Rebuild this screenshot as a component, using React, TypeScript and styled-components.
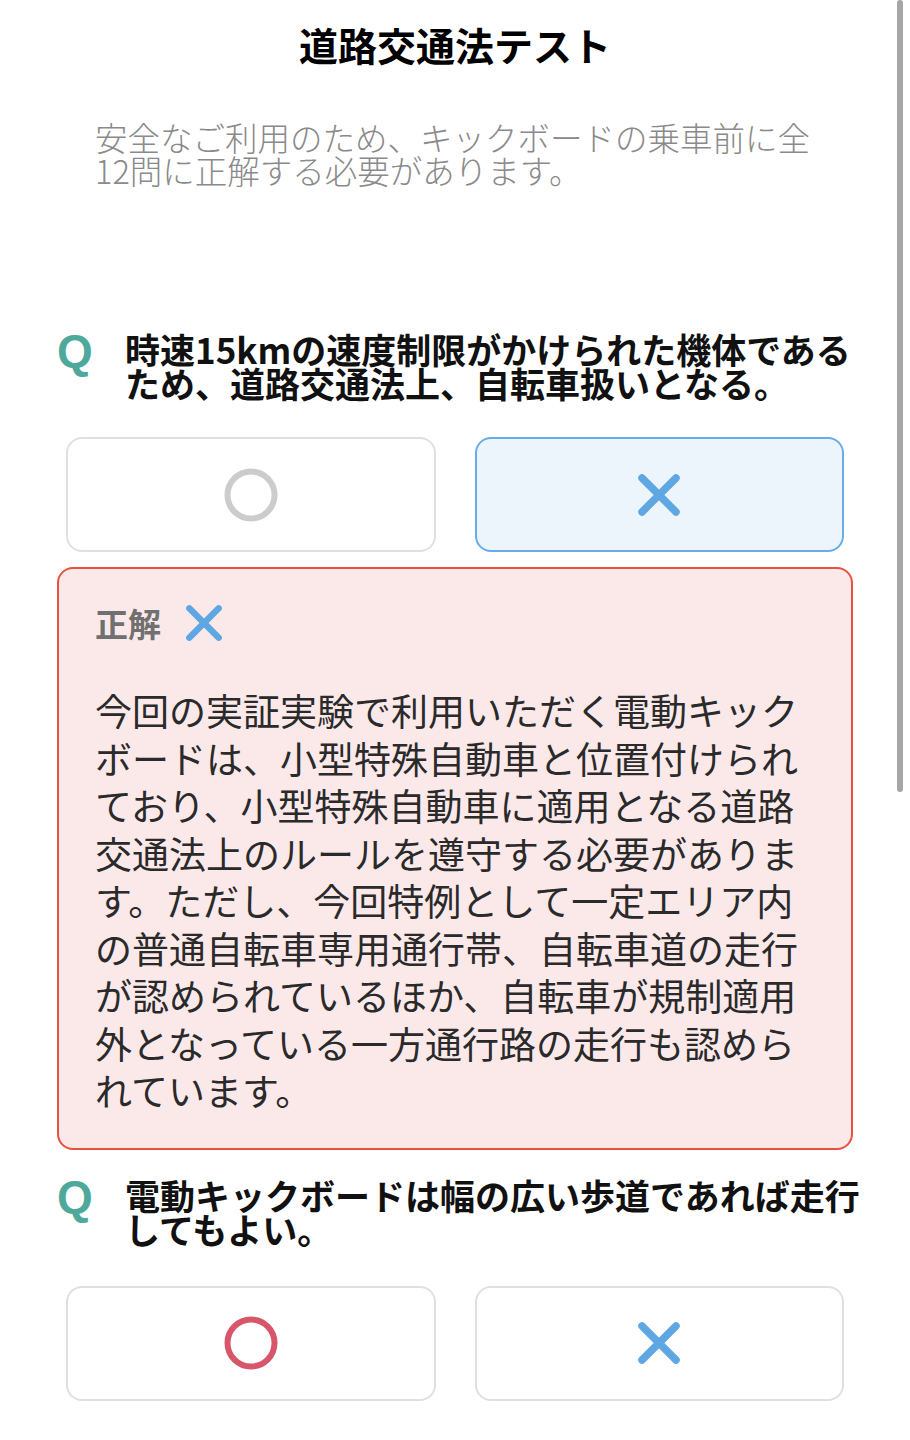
import React from "react";
import styled, { createGlobalStyle } from "styled-components";

const GlobalStyle = createGlobalStyle`
  html, body { margin: 0; padding: 0; background: #ffffff; }
  body {
    font-family: "Noto Sans CJK JP", "Noto Sans", sans-serif;
    color: #111;
  }
`;

const Page = styled.div`
  position: relative;
  width: 910px;
  min-height: 1440px;
  box-sizing: border-box;
  padding: 21px 57px 40px 57px;
  overflow: hidden;
`;

const ScrollThumb = styled.div`
  position: absolute;
  top: 0;
  right: 7px;
  width: 6px;
  height: 792px;
  border-radius: 3px;
  background: #a6a6a6;
`;

const Title = styled.h1`
  margin: 0;
  text-align: center;
  font-size: 39px;
  line-height: 47px;
  font-weight: 700;
  color: #000;
`;

const Lead = styled.p`
  margin: 52px 0 0 38px;
  font-size: 32.5px;
  line-height: 33px;
  font-weight: 300;
  color: #8a8a8a;
  width: 730px;
`;

const Question = styled.div<{ $top: number }>`
  display: flex;
  align-items: flex-start;
  margin-top: ${(p) => p.$top}px;
`;

const QMark = styled.span`
  flex: none;
  width: 68px;
  font-family: "Liberation Sans", Arial, sans-serif;
  font-weight: 700;
  font-size: 46px;
  line-height: 34px;
  color: #4ea99b;
  margin-top: 2px;
`;

const QText = styled.p`
  flex: none;
  margin: 0;
  width: 745px;
  font-size: 35px;
  line-height: 34px;
  font-weight: 700;
  color: #111;
`;

const Choices = styled.div<{ $top: number }>`
  display: grid;
  grid-template-columns: 1fr 1fr;
  gap: 39px;
  margin: ${(p) => p.$top}px 9px 0 9px;
`;

const Choice = styled.button<{ $selected?: boolean }>`
  height: 115px;
  display: flex;
  align-items: center;
  justify-content: center;
  border-radius: 16px;
  box-sizing: border-box;
  border: 2px solid ${(p) => (p.$selected ? "#68ade6" : "#e0e0e0")};
  background: ${(p) => (p.$selected ? "#edf5fc" : "#ffffff")};
  padding: 0;
  cursor: pointer;
`;

const Explanation = styled.section`
  margin-top: 15px;
  border: 2px solid #e8513f;
  border-radius: 16px;
  background: #fbe9ea;
  padding: 34px 36px 33px 36px;
`;

const AnswerRow = styled.div`
  display: flex;
  align-items: center;
  gap: 24px;
  height: 40px;
`;

const AnswerLabel = styled.span`
  font-size: 33px;
  line-height: 40px;
  font-weight: 700;
  color: #707070;
`;

const ExplainText = styled.p`
  margin: 44px 0 0 0;
  font-size: 37px;
  line-height: 47.5px;
  font-weight: 400;
  color: #2a2a2a;
`;

const Circle = ({ color }: { color: string }) => (
  <svg width="56" height="56" viewBox="0 0 56 56">
    <circle cx="28" cy="28" r="23.5" fill="none" stroke={color} strokeWidth="6" />
  </svg>
);

const Cross = ({ size = 44 }: { size?: number }) => (
  <svg width={size} height={size} viewBox="0 0 44 44">
    <path
      d="M5 5 L39 39 M39 5 L5 39"
      stroke="#5ea7e2"
      strokeWidth="7.5"
      strokeLinecap="round"
      fill="none"
    />
  </svg>
);

export default function App() {
  return (
    <>
      <GlobalStyle />
      <Page>
        <ScrollThumb />
        <Title>道路交通法テスト</Title>
        <Lead>
          安全なご利用のため、キックボードの乗車前に全12問に正解する必要があります。
        </Lead>

        <Question $top={146}>
          <QMark>Q</QMark>
          <QText>
            時速15kmの速度制限がかけられた機体であるため、道路交通法上、自転車扱いとなる。
          </QText>
        </Question>
        <Choices $top={37}>
          <Choice>
            <Circle color="#cccccc" />
          </Choice>
          <Choice $selected>
            <Cross />
          </Choice>
        </Choices>

        <Explanation>
          <AnswerRow>
            <AnswerLabel>正解</AnswerLabel>
            <Cross size={38} />
          </AnswerRow>
          <ExplainText>
            今回の実証実験で利用いただく電動キックボードは、小型特殊自動車と位置付けられており、小型特殊自動車に適用となる道路交通法上のルールを遵守する必要があります。ただし、今回特例として一定エリア内の普通自転車専用通行帯、自転車道の走行が認められているほか、自転車が規制適用外となっている一方通行路の走行も認められています。
          </ExplainText>
        </Explanation>

        <Question $top={28}>
          <QMark>Q</QMark>
          <QText>電動キックボードは幅の広い歩道であれば走行してもよい。</QText>
        </Question>
        <Choices $top={40}>
          <Choice>
            <Circle color="#d8566a" />
          </Choice>
          <Choice>
            <Cross />
          </Choice>
        </Choices>
      </Page>
    </>
  );
}
